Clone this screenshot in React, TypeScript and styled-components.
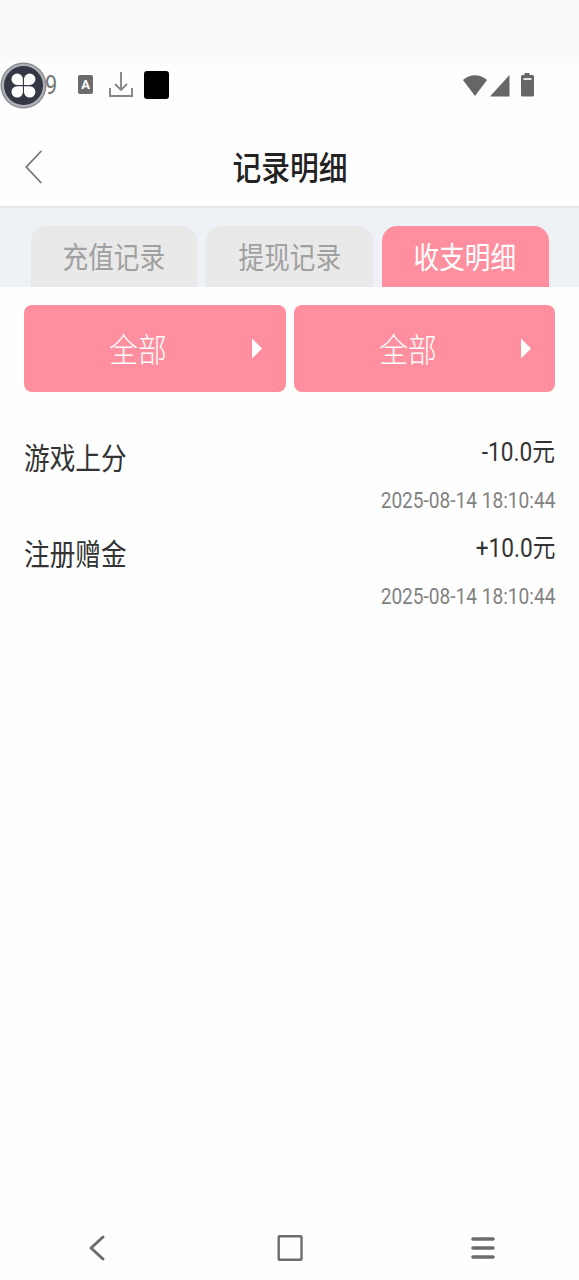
import React from 'react';
import styled, { createGlobalStyle } from 'styled-components';

const GlobalStyle = createGlobalStyle`
  * { box-sizing: border-box; }
  body { margin: 0; background: #fefefe; }
`;

const Page = styled.div`
  width: 579px;
  height: 1280px;
  display: flex;
  flex-direction: column;
  overflow: hidden;
  background: #fefefe;
  font-family: Roboto, 'Noto Sans CJK SC', sans-serif;
  color: #333;
`;

const TopStrip = styled.div`
  height: 63px;
  flex: none;
  background: #fafafa;
`;

const StatusBar = styled.div`
  height: 65px;
  flex: none;
  display: flex;
  align-items: flex-start;
  justify-content: space-between;
  padding-right: 43px;
`;

const StatusGroup = styled.div`
  display: flex;
  align-items: center;
  height: 46px;
`;

const Clock = styled.span`
  width: 12px;
  margin-left: -3px;
  font-size: 25px;
  line-height: 46px;
  color: #777;
  transform: scaleX(0.87);
  transform-origin: left;
`;

const BlackTile = styled.div`
  width: 25px;
  height: 28px;
  margin: -3px 0 0 11px;
  border-radius: 3px;
  background: #000;
`;

const Narrow = styled.span<{ $origin?: string }>`
  display: inline-block;
  white-space: nowrap;
  transform: scaleX(0.872);
  transform-origin: ${(p) => p.$origin ?? 'center'};
`;

const Header = styled.header`
  height: 80px;
  flex: none;
  display: grid;
  grid-template-columns: 60px 1fr 60px;
  align-items: center;
  border-bottom: 2px solid #e4e6e8;
`;

const BackButton = styled.div`
  display: flex;
  padding-left: 24px;
`;

const Title = styled.h1`
  margin: 0;
  padding-top: 3px;
  text-align: center;
  font-size: 33px;
  line-height: 48px;
  font-weight: 500;
  color: #222;
`;

const Tabs = styled.nav`
  height: 79px;
  flex: none;
  display: flex;
  gap: 9px;
  padding: 18px 30.5px 0;
  background: #eef2f7;
`;

const Tab = styled.div<{ $active?: boolean }>`
  flex: 1;
  border-radius: 15px 15px 0 0;
  background: ${(p) => (p.$active ? '#ff8f9e' : '#e9e9e9')};
  color: ${(p) => (p.$active ? '#fff' : '#a0a0a0')};
  font-size: 29.4px;
  line-height: 64px;
  text-align: center;
`;

const Filters = styled.div`
  display: flex;
  gap: 8px;
  padding: 18px 24px 0;
  flex: none;
`;

const Filter = styled.div`
  flex: 1;
  height: 87px;
  display: flex;
  align-items: center;
  padding-right: 24px;
  border-radius: 8px;
  background: #ff8f9e;
  color: #fff;
`;

const FilterLabel = styled.div`
  flex: 1;
  padding: 4px 0 0 1px;
  font-size: 33px;
  line-height: 83px;
  font-weight: 300;
  text-align: center;
`;

const Records = styled.main`
  flex: 1;
  padding: 41px 24px 0;
`;

const Record = styled.div`
  display: flex;
  justify-content: space-between;
  height: 95.5px;
`;

const RecordName = styled.div`
  font-size: 29.4px;
  line-height: 52px;
`;

const RecordInfo = styled.div`
  display: flex;
  flex-direction: column;
  align-items: flex-end;
`;

const Amount = styled.div`
  font-size: 26px;
  line-height: 38px;
`;

const Time = styled.div`
  margin-top: 14px;
  font-size: 21.9px;
  line-height: 32px;
  color: #828282;
`;

const NavBar = styled.footer`
  height: 64px;
  flex: none;
  display: grid;
  grid-template-columns: repeat(3, 1fr);
  align-items: center;
  justify-items: center;
`;

const records = [
  { name: '游戏上分', amount: '-10.0元', time: '2025-08-14 18:10:44' },
  { name: '注册赠金', amount: '+10.0元', time: '2025-08-14 18:10:44' },
];

const BallIcon = styled.svg`
  position: relative;
  z-index: 1;
`;

const FloatingBall = () => (
  <BallIcon width="48" height="48" viewBox="0 0 48 48">
    <circle cx="23.5" cy="23.5" r="23" fill="#85868c" />
    <circle cx="23.5" cy="23.5" r="21.8" fill="#aeb0b7" />
    <circle cx="23.5" cy="23.5" r="19.5" fill="#343845" />
    <g fill="#fff">
      <path d="M17.2 11.5a5.700 5.700 0 0 1 5.700 5.700V23h-5.700a5.700 5.700 0 0 1 0-11.500z" />
      <path d="M29.700 11.500a5.700 5.700 0 0 1 0 11.500H24v-5.800a5.700 5.700 0 0 1 5.700-5.700z" />
      <path d="M17.200 24.200h5.700v5.700a5.700 5.700 0 1 1-5.700-5.700z" />
      <path d="M24 24.200h5.700a5.700 5.700 0 1 1-5.700 5.700z" />
    </g>
  </BallIcon>
);

const BadgeBox = styled.div`
  width: 15px;
  height: 19px;
  margin: -3px 0 0 21px;
  border-radius: 2px;
  background: #6c6c6c;
  color: #fff;
  font-size: 13px;
  font-weight: 700;
  line-height: 19px;
  text-align: center;
`;

const DownloadIcon = styled.svg`
  margin: -4px 0 0 16px;
`;

const App = () => (
  <>
    <GlobalStyle />
    <Page>
      <TopStrip />
      <StatusBar>
        <StatusGroup>
          <FloatingBall />
          <Clock>9</Clock>
          <BadgeBox>A</BadgeBox>
          <DownloadIcon width="24" height="28" viewBox="0 0 24 28" fill="none" stroke="#858585" strokeWidth="1.9">
            <path d="M12 2v18M6 14l6 6 6-6M1 18v8h22v-8" />
          </DownloadIcon>
          <BlackTile />
        </StatusGroup>
        <StatusGroup>
          <svg width="74" height="28" viewBox="0 0 74 28" fill="#666">
            <path d="M1 8C7.500 1.500 18.500 1.500 25 8L13 24z" />
            <path d="M28 24.500L47.500 3v21.500z" />
            <path d="M62.500 1h5v2h3a1.500 1.500 0 0 1 1.500 1.500V23a1.500 1.500 0 0 1-1.500 1.500h-10A1.500 1.500 0 0 1 59 23V4.500A1.500 1.500 0 0 1 60.500 3h2z" />
            <path d="M61.500 6h8v2h-8z" fill="#e4e4e4" />
          </svg>
        </StatusGroup>
      </StatusBar>
      <Header>
        <BackButton>
          <svg width="20" height="36" viewBox="0 0 20 36" fill="none" stroke="#777" strokeWidth="1.800">
            <path d="M17.300 2L2.300 18l15 16" />
          </svg>
        </BackButton>
        <Title><Narrow>记录明细</Narrow></Title>
      </Header>
      <Tabs>
        <Tab><Narrow>充值记录</Narrow></Tab>
        <Tab><Narrow>提现记录</Narrow></Tab>
        <Tab $active><Narrow>收支明细</Narrow></Tab>
      </Tabs>
      <Filters>
        {[0, 1].map((i) => (
          <Filter key={i}>
            <FilterLabel><Narrow>全部</Narrow></FilterLabel>
            <svg width="10" height="22" viewBox="0 0 10 22" fill="#fff">
              <path d="M0 0.500L10 10.500L0 20.500z" />
            </svg>
          </Filter>
        ))}
      </Filters>
      <Records>
        {records.map((r) => (
          <Record key={r.name}>
            <RecordName><Narrow $origin="left">{r.name}</Narrow></RecordName>
            <RecordInfo>
              <Amount><Narrow $origin="right">{r.amount}</Narrow></Amount>
              <Time><Narrow $origin="right">{r.time}</Narrow></Time>
            </RecordInfo>
          </Record>
        ))}
      </Records>
      <NavBar>
        <svg width="18" height="28" viewBox="0 0 18 28" fill="none" stroke="#6c6c6c" strokeWidth="3" strokeLinecap="round" strokeLinejoin="round">
          <path d="M15 3L3 14l12 11" />
        </svg>
        <svg width="26" height="28" viewBox="0 0 26 28" fill="none" stroke="#6c6c6c" strokeWidth="2.400">
          <rect x="1.700" y="2.200" width="22.800" height="23.600" rx="0.800" />
        </svg>
        <svg width="24" height="24" viewBox="0 0 24 24" fill="none" stroke="#6c6c6c" strokeWidth="3.600" strokeLinecap="round">
          <path d="M2 3h20M2 12h20M2 21h20" />
        </svg>
      </NavBar>
    </Page>
  </>
);

export default App;
